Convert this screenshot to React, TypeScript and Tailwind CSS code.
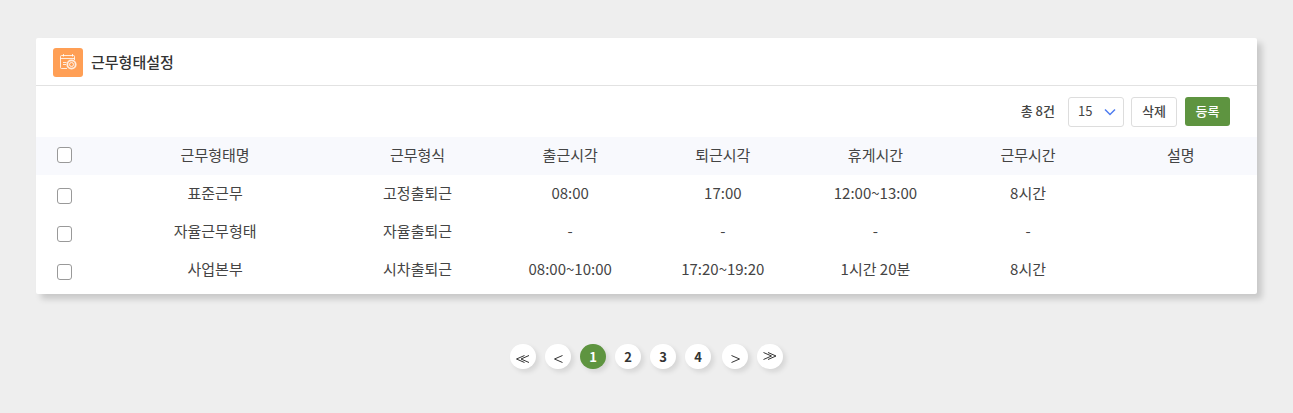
import React, { useState } from 'react';
import { clsx } from 'clsx';

interface WorkType {
  name: string;
  form: string;
  start: string;
  end: string;
  rest: string;
  hours: string;
  desc: string;
}

const HEADERS = ['근무형태명', '근무형식', '출근시각', '퇴근시각', '휴게시간', '근무시간', '설명'];

const ROWS: WorkType[] = [
  { name: '표준근무', form: '고정출퇴근', start: '08:00', end: '17:00', rest: '12:00~13:00', hours: '8시간', desc: '' },
  { name: '자율근무형태', form: '자율출퇴근', start: '-', end: '-', rest: '-', hours: '-', desc: '' },
  { name: '사업본부', form: '시차출퇴근', start: '08:00~10:00', end: '17:20~19:20', rest: '1시간 20분', hours: '8시간', desc: '' },
];

function CalendarIcon() {
  return (
    <svg width="18" height="18" viewBox="0 0 18 18" fill="none" stroke="#fff" strokeOpacity="0.8" strokeWidth="1" aria-hidden="true">
      <path d="M8 15.5H2.5a1 1 0 0 1-1-1v-11a1 1 0 0 1 1-1h12a1 1 0 0 1 1 1V7" />
      <path d="M1.5 5.5h14M4.5 1v2.5M13.5 1v2.5M4 9.5h3.5M4 11.5h3" />
      <circle cx="12.5" cy="11.5" r="4.2" strokeWidth="1.8" />
      <circle cx="12.5" cy="11.5" r="2" />
    </svg>
  );
}

const ARROWS = {
  first: 'M8.5 0.5l-8 3.5 8 3.5M13 0.5L5 4l8 3.5',
  prev: 'M8.5 0.5l-8 3.5 8 3.5',
  next: 'M0.5 0.5l8 3.5-8 3.5',
  last: 'M0.5 0.5l8 3.5-8 3.5M5 0.5L13 4 5 7.5',
};

function Arrow({ type }: { type: keyof typeof ARROWS }) {
  const width = type === 'first' || type === 'last' ? 14 : 9;
  return (
    <svg width={width} height="8" viewBox={`0 0 ${width} 8`} fill="none" stroke="#333" strokeWidth="1" aria-hidden="true">
      <path d={ARROWS[type]} />
    </svg>
  );
}

interface CheckProps {
  label: string;
  checked: boolean;
  onChange: () => void;
}

function Check({ label, checked, onChange }: CheckProps) {
  return (
    <input
      type="checkbox"
      aria-label={label}
      checked={checked}
      onChange={onChange}
      className="block w-[15px] h-4 appearance-none rounded-[3px] border border-[#999] bg-white checked:bg-[#5e9440]"
    />
  );
}

interface PageButtonProps {
  label: string;
  active?: boolean;
  className?: string;
  onClick: () => void;
  children: React.ReactNode;
}

function PageButton({ label, active, className, onClick, children }: PageButtonProps) {
  return (
    <button
      type="button"
      aria-label={label}
      aria-current={active ? 'page' : undefined}
      onClick={onClick}
      className={clsx(
        'flex h-[25px] w-[26px] items-center justify-center rounded-full leading-none shadow-[3px_3px_5px_rgba(0,0,0,0.1)]',
        active ? 'bg-[#5e9440] text-white' : 'bg-white text-[#333]',
        className
      )}
    >
      {children}
    </button>
  );
}

export default function App() {
  const [selected, setSelected] = useState<number[]>([]);
  const [size, setSize] = useState('15');
  const [page, setPage] = useState(1);

  const toggle = (i: number) => {
    setSelected((prev) => (prev.includes(i) ? prev.filter((n) => n !== i) : [...prev, i]));
  };

  const toggleAll = () => {
    setSelected(selected.length === ROWS.length ? [] : ROWS.map((_, i) => i));
  };

  return (
    <div className="min-h-screen bg-[#eee] px-9 pt-[38px] font-['Noto_Sans_CJK_KR',sans-serif] text-[#444]">
      <section className="rounded-[2px] bg-white pb-[5px] shadow-[5px_5px_6px_rgba(0,0,0,0.16)]">
        <header className="flex h-12 items-center gap-2 border-b border-[#e2e2e2] px-[17px] pt-px">
          <span className="flex h-[29px] w-[30px] items-center justify-center rounded-[3px] bg-[#ff9f55]">
            <CalendarIcon />
          </span>
          <h1 className="text-[15px] font-medium text-[#333]">근무형태설정</h1>
        </header>

        <div className="flex items-start justify-end px-[27px] pt-[11px] pb-[10px] text-[13px] font-medium">
          <span className="mr-[13px] leading-7 text-[#444]">총 8건</span>
          <div className="relative mr-[7px]">
            <select
              aria-label="페이지당 건수"
              value={size}
              onChange={(e) => setSize(e.target.value)}
              className="block h-[30px] w-14 appearance-none rounded-[3px] border border-[#ddd] bg-white pb-0.5 pl-[9px] font-normal"
            >
              <option>15</option>
              <option>30</option>
              <option>50</option>
            </select>
            <svg
              width="12"
              height="8"
              viewBox="0 0 12 8"
              fill="none"
              stroke="#4f7df0"
              strokeWidth="1.5"
              className="pointer-events-none absolute top-[11px] right-2"
              aria-hidden="true"
            >
              <path d="M1 1.5l5 5 5-5" />
            </svg>
          </div>
          <button type="button" className="mr-2 h-[30px] w-[46px] rounded-[3px] border border-[#ddd] bg-white pb-0.5">
            삭제
          </button>
          <button type="button" className="h-[29px] w-[45px] rounded-[3px] bg-[#5e9440] pb-0.5 text-white">
            등록
          </button>
        </div>

        <table className="w-full table-fixed text-center text-[15px]">
          <colgroup>
            <col className="w-[53px]" />
            <col />
            {HEADERS.slice(1).map((h) => (
              <col key={h} className="w-[12.5%]" />
            ))}
          </colgroup>
          <thead>
            <tr className="h-[38px] bg-[#f8f9fd]">
              <th className="pb-0.5 pl-[21px]">
                <Check label="전체 선택" checked={selected.length === ROWS.length} onChange={toggleAll} />
              </th>
              {HEADERS.map((h) => (
                <th key={h} className="pb-0.5 font-normal">{h}</th>
              ))}
            </tr>
          </thead>
          <tbody>
            {ROWS.map((row, i) => (
              <tr key={row.name} className="h-[38px]">
                <td className="pt-1 pl-[21px]">
                  <Check label={row.name} checked={selected.includes(i)} onChange={() => toggle(i)} />
                </td>
                <td className="pb-0.5">{row.name}</td>
                <td className="pb-0.5">{row.form}</td>
                <td className="pb-0.5">{row.start}</td>
                <td className="pb-0.5">{row.end}</td>
                <td className="pb-0.5">{row.rest}</td>
                <td className="pb-0.5">{row.hours}</td>
                <td className="pb-0.5">{row.desc}</td>
              </tr>
            ))}
          </tbody>
        </table>
      </section>

      <nav aria-label="페이지" className="mt-[50px] flex justify-center gap-[9px]">
        <PageButton label="처음" className="pt-1" onClick={() => setPage(1)}>
          <Arrow type="first" />
        </PageButton>
        <PageButton label="이전" className="pt-1" onClick={() => setPage(Math.max(1, page - 1))}>
          <Arrow type="prev" />
        </PageButton>
        {[1, 2, 3, 4].map((n) => (
          <PageButton key={n} label={`${n}`} active={n === page} className="pb-px text-[13px] font-bold" onClick={() => setPage(n)}>
            {n}
          </PageButton>
        ))}
        <PageButton label="다음" className="ml-0.5 pt-1" onClick={() => setPage(Math.min(4, page + 1))}>
          <Arrow type="next" />
        </PageButton>
        <PageButton label="마지막" className="pb-0.5" onClick={() => setPage(4)}>
          <Arrow type="last" />
        </PageButton>
      </nav>
    </div>
  );
}
